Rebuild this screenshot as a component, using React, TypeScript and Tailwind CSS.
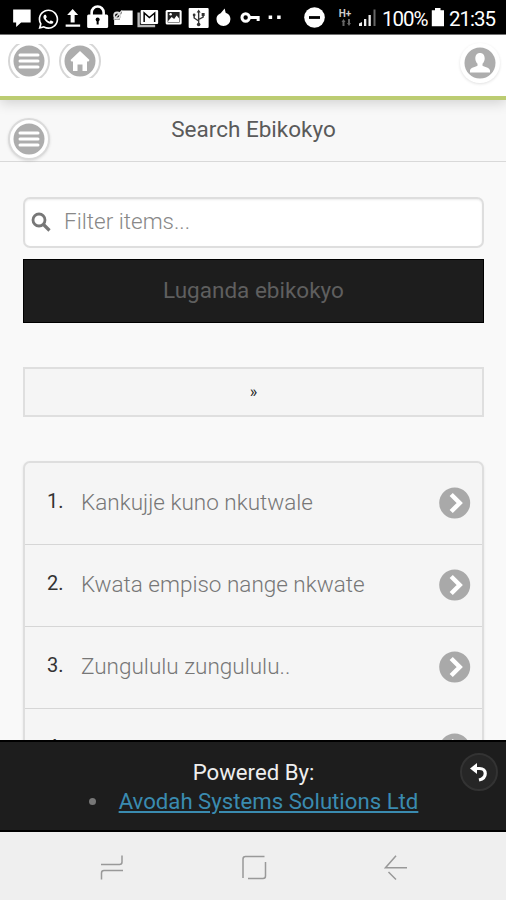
import type { ReactNode } from 'react';
import { FaWhatsapp } from 'react-icons/fa';

const items = [
  'Kankujje kuno nkutwale',
  'Kwata empiso nange nkwate',
  'Zungululu zungululu..',
  'Nze kabwa kange nkugwe',
];

const StatusIcon = ({ children }: { children: ReactNode }) => (
  <svg viewBox="0 0 25 34" className="h-[34px] w-[25.3px] shrink-0" fill="#fff">
    {children}
  </svg>
);

const StatusBar = () => (
  <div className="flex h-[35px] shrink-0 border-b border-[#777] bg-black text-white">
    <div className="ml-[9px] flex w-[279px]">
      <StatusIcon>
        <path d="M4 9.500h17.500v13H12l-5 4.500v-4.500H4z" />
      </StatusIcon>
      <StatusIcon>
        <FaWhatsapp x="3" y="8" width="19" height="19" />
      </StatusIcon>
      <StatusIcon>
        <path d="M12.500 9l5.500 6h-3.500v7.500h-4V15H7zM5.500 24.500h14.500v2.300H5.500z" />
      </StatusIcon>
      <StatusIcon>
        <path d="M6.500 15v-2.500a6 6 0 0 1 12 0V15" fill="none" stroke="#fff" strokeWidth="2.600" />
        <rect x="2" y="14.500" width="21" height="13.500" rx="1.500" />
        <circle cx="12.500" cy="19.500" r="2" fill="#000" />
        <path d="M11.500 20h2v4.500h-2z" fill="#000" />
      </StatusIcon>
      <StatusIcon>
        <path d="M12 10.500h10.500V25H4v-5.500h5.500z" />
        <circle cx="7" cy="15.500" r="3" fill="none" stroke="#ddd" strokeWidth="1.800" />
        <path d="M3.500 19.500l8.500-9" stroke="#ddd" strokeWidth="1.500" fill="none" />
      </StatusIcon>
      <StatusIcon>
        <path d="M3.500 12.500v13.500H20" fill="none" stroke="#bbb" strokeWidth="2.400" />
        <rect x="5.500" y="10" width="17.500" height="14" rx="1" />
        <path d="M9 22V13l5.200 4.500L19.500 13v9" fill="none" stroke="#000" strokeWidth="1.500" />
      </StatusIcon>
      <StatusIcon>
        <rect x="4.500" y="10" width="16" height="14.500" rx="1.500" />
        <path d="M6.500 12h12v10.500h-12z" fill="#222" />
        <path d="M7 21l3.500-4 2.500 2 2.500-3.500 2.500 3V22H7z" />
        <circle cx="9.500" cy="14.200" r="1.200" />
      </StatusIcon>
      <StatusIcon>
        <rect x="2.500" y="8" width="20" height="20" rx="1" />
        <path d="M12.500 24V12M8 15v3l4.500 3M17 14.500v2.500l-4.500 2.500" fill="none" stroke="#333" strokeWidth="1.400" />
        <path d="M12.500 9.500l2 3h-4zM15.500 13h3v3h-3z" fill="#333" />
        <circle cx="8" cy="15" r="1.400" fill="#333" />
        <circle cx="12.500" cy="24.500" r="1.800" fill="#333" />
      </StatusIcon>
      <StatusIcon>
        <path d="M13.500 8.500l1 4.200c3 .8 4.800 3.300 4.800 6.300a7 7 0 0 1-14 0c0-2.800 1.600-4.700 4.200-5.800z" />
      </StatusIcon>
      <StatusIcon>
        <circle cx="8.500" cy="17.500" r="3.700" fill="none" stroke="#fff" strokeWidth="3" />
        <path d="M12 16h10.500v5h-3v-2H12z" />
      </StatusIcon>
      <StatusIcon>
        <path d="M6.500 15.500h3.500V19H6.500zM15 15.500h3.500V19H15z" />
      </StatusIcon>
    </div>
    <svg viewBox="0 0 22 34" className="ml-[16px] h-[34px] w-[22px] shrink-0">
      <circle cx="10.500" cy="17.500" r="10.300" fill="#fff" />
      <path d="M5 17.500h11" stroke="#000" strokeWidth="2.800" />
    </svg>
    <div className="ml-[10px] w-[18px] pt-[10px] text-center font-['Roboto'] text-[10px] leading-[8px] font-bold text-[#ccc]">
      H+
      <svg viewBox="0 0 18 8" className="mt-px h-2 w-[18px]" fill="#666">
        <path d="M5.500 3L7.500 0l2 3h-1v4h-2V3zM11 4h1V0h2v4h1l-2 3z" />
      </svg>
    </div>
    <svg viewBox="0 0 18 34" className="ml-[5px] h-[34px] w-[18px] shrink-0">
      <path d="M0 26v-2.500l3-1.500v4zM5 19h2.300v7H5zM9.500 15h2.300v11H9.500z" fill="#eee" />
      <path d="M14.500 9.500h2V26h-2z" fill="#666" />
    </svg>
    <span className="ml-[5px] w-[46px] pt-[7px] font-['Roboto'] text-[20.500px] leading-[24px] tracking-[-1px]">100%</span>
    <svg viewBox="0 0 14 34" className="ml-[3px] h-[34px] w-[14px] shrink-0" fill="#fff">
      <path d="M4 8h5.500v2.200H13v16H.800v-16H4z" />
    </svg>
    <span className="ml-[4px] pt-[7px] font-['Roboto'] text-[20.500px] leading-[24px] tracking-[-1px]">21:35</span>
  </div>
);

const MenuDisc = () => (
  <svg viewBox="0 0 32 32" className="size-8 shrink-0">
    <circle cx="16" cy="16" r="15.500" fill="#adadad" />
    <path d="M7 10h18M7 16h18M7 22h18" stroke="#fff" strokeWidth="3" strokeLinecap="round" />
  </svg>
);

const HomeDisc = () => (
  <svg viewBox="0 0 32 32" className="size-8 shrink-0">
    <circle cx="16" cy="16" r="15.500" fill="#adadad" />
    <path d="M16 6l9.500 9-1 1.500H23v9.500h-4.500v-6.500h-5V26H9v-9.500H7.500l-1-1.500z" fill="#fff" />
  </svg>
);

const ClippedButton = ({ children }: { children: ReactNode }) => (
  <div className="flex h-[34px] w-[42px] items-center justify-center overflow-hidden">
    <div className="flex size-[42px] shrink-0 items-center justify-center rounded-full border-2 border-[#d6d6d6] bg-white">
      {children}
    </div>
  </div>
);

const Arrow = () => (
  <svg viewBox="0 0 32 32" className="size-8 shrink-0">
    <circle cx="15.700" cy="16" r="15.500" fill="#a9a9a9" />
    <path d="M12.200 7.500l8.500 8.500-8.500 8.500" fill="none" stroke="#fff" strokeWidth="4.500" />
  </svg>
);

export default function App() {
  return (
    <div className="flex h-[900px] w-[506px] flex-col overflow-hidden bg-[#f9f9f9] font-['Roboto',sans-serif] text-[22.500px]">
      <StatusBar />
      <header className="z-10 flex h-[65px] shrink-0 items-start border-b-4 border-[#bccc72] bg-white pl-2 shadow-[0_3px_12px_rgba(0,0,0,0.16)]">
        <div className="mt-[9px] flex gap-[9px]">
          <ClippedButton><MenuDisc /></ClippedButton>
          <ClippedButton><HomeDisc /></ClippedButton>
        </div>
        <div className="mt-[8px] mr-[6px] ml-auto flex size-10 items-center justify-center rounded-full bg-white shadow-[0_1px_3px_rgba(0,0,0,0.12)]">
          <svg viewBox="0 0 32 32" className="size-8">
            <circle cx="16" cy="16" r="15.500" fill="#adadad" />
            <path d="M16 6c3 0 4.700 2.200 4.700 5.300 0 2.300-.9 4.200-2.200 5.400v1.800c0 1 7.500 2 7.500 5V25.500H6v-2c0-3 7.500-4 7.500-5v-1.800c-1.300-1.200-2.200-3.100-2.200-5.400C11.300 8.200 13 6 16 6z" fill="#fff" />
          </svg>
        </div>
      </header>

      <div className="flex h-[62px] shrink-0 items-start border-b border-[#d9d9d9] bg-[#f8f8f8] pl-2">
        <div className="mt-[18px] flex size-[42px] items-center justify-center rounded-full border-2 border-[#dadada] bg-white shadow-[0_1px_3px_rgba(0,0,0,0.12)]">
          <MenuDisc />
        </div>
        <h1 className="mt-[15px] flex-1 pr-[49px] text-center leading-[28px] text-[#5a5a5a]">Search Ebikokyo</h1>
      </div>

      <main className="flex min-h-0 flex-1 flex-col overflow-hidden pt-[35px] pr-[22px] pl-[23px]">
        <div className="flex h-[51px] shrink-0 items-center rounded-[7px] border-2 border-[#dedede] bg-white pb-px pl-[6px] shadow-[inset_0_1px_2px_rgba(0,0,0,0.08)]">
          <svg viewBox="0 0 20 20" className="size-5" fill="none" stroke="#777">
            <circle cx="8" cy="8" r="6" strokeWidth="2.800" />
            <path d="M12.500 12.500l6 6" strokeWidth="3.200" />
          </svg>
          <span className="ml-[13px] font-light text-[#888]">Filter items...</span>
        </div>
        <div className="mt-[11px] flex h-[64px] shrink-0 items-center justify-center border border-black bg-[#1d1d1d] text-[#5f5f5f]">
          Luganda ebikokyo
        </div>
        <div className="mt-[44px] flex h-[50px] shrink-0 items-center justify-center border-2 border-[#dfdfdf] bg-[#f5f5f5] text-[16px] text-[#222]">
          »
        </div>
        <ol className="mt-[44px] shrink-0 rounded-t-[7px] border-2 border-[#dedede] bg-[#f5f5f5] shadow-[0_1px_3px_rgba(0,0,0,0.08)]">
          {items.map((item, i) => (
            <li key={item} className="flex h-[82px] items-center border-b border-[#d6d6d6] pr-[11px] pb-[2px] pl-[22px]">
              <span className="w-[34px] pb-[3px] text-[20px] text-[#333]">{i + 1}.</span>
              <span className="flex-1 pt-px font-light whitespace-nowrap text-[#777]">{item}</span>
              <Arrow />
            </li>
          ))}
        </ol>
      </main>

      <footer className="flex h-[92px] shrink-0 border-y-2 border-black bg-[#1d1d1d]">
        <div className="flex-1 pt-[16px] pl-[47px] text-center text-[22.200px] leading-[29px]">
          <p className="text-[#eee]">Powered By:</p>
          <ul className="flex items-center justify-center">
            <li className="flex items-center">
              <span className="mr-[23px] size-[7px] rounded-full bg-[#777]" />
              <a className="text-[#3a8bb0] underline">Avodah Systems Solutions Ltd</a>
            </li>
          </ul>
        </div>
        <div className="mt-[11px] mr-[8px] flex size-[38px] items-center justify-center rounded-full border-2 border-[#333] bg-[#262626]">
          <svg viewBox="0 0 20 20" className="size-5">
            <path d="M1 6.500L8 1v3.500V12z" fill="#fff" />
            <path d="M6 6.500h4.500c7.500 0 8 9.500-.5 11.500" fill="none" stroke="#fff" strokeWidth="3.200" />
          </svg>
        </div>
      </footer>

      <nav className="flex h-[68px] shrink-0 items-start bg-[#efefef] pt-[23px]">
        <svg viewBox="0 0 24 26" className="ml-[100px] h-[26px] w-[24px]" fill="none" stroke="#999" strokeWidth="1.500">
          <path d="M1 9.500h18.500q2.500 0 2.500-2.500V.500M23 15.500H4q-2.500 0-2.500 2.500v6.500" />
        </svg>
        <svg viewBox="0 0 26 26" className="ml-[117px] size-[26px]" fill="none" stroke="#999" strokeWidth="1.500">
          <path d="M23.500 1.500H4.500q-2.500 0-2.500 2.500v19M7 23.500h15q2.500 0 2.500-2.500V7" />
        </svg>
        <svg viewBox="0 0 24 26" className="ml-[117px] h-[26px] w-[24px]" fill="none" stroke="#999" strokeWidth="1.500">
          <path d="M23 12.700H1.500L12 .700M4.500 17l7.500 7.500" />
        </svg>
      </nav>
    </div>
  );
}
